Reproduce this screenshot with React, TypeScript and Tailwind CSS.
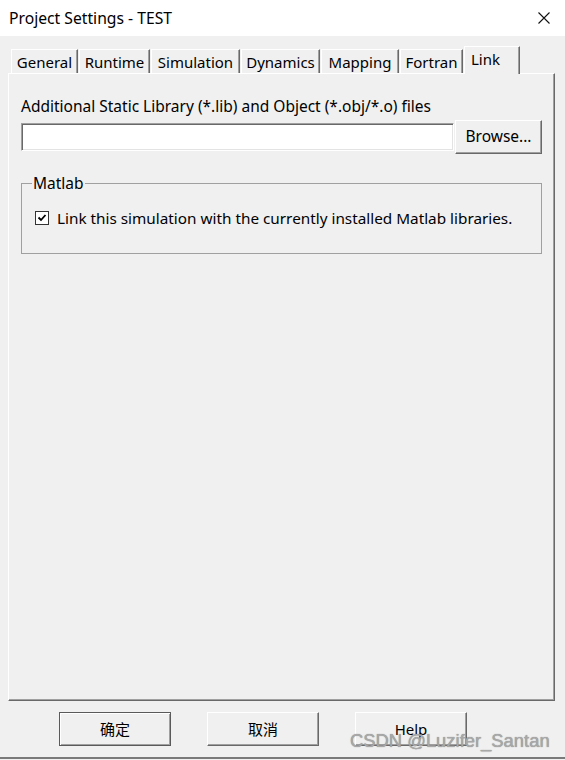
import React, { useState } from "react";

const tabs = [
  { label: "General", w: "w-[67px]" },
  { label: "Runtime", w: "w-[71px]" },
  { label: "Simulation", w: "w-[89px]" },
  { label: "Dynamics", w: "w-[79px]" },
  { label: "Mapping", w: "w-[78px]" },
  { label: "Fortran", w: "w-[63px]" },
  { label: "Link", w: "w-[56px]" },
];

const font = "font-['Noto_Sans','Noto_Sans_CJK_SC',sans-serif]";

const DialogButton: React.FC<{ label: string; isDefault?: boolean }> = ({
  label,
  isDefault,
}) => (
  <button
    type="button"
    className={`w-[112px] h-[34px] flex items-center justify-center text-[15px] text-black bg-[#f0f0f0] ${
      isDefault
        ? "border border-[#5a5a5a] shadow-[inset_1px_1px_0_#ffffff,inset_-1px_-1px_0_#a0a0a0]"
        : "border border-t-white border-l-white border-r-[#696969] border-b-[#696969] shadow-[inset_-1px_-1px_0_#a0a0a0]"
    }`}
  >
    {label}
  </button>
);

const App: React.FC = () => {
  const [active, setActive] = useState("Link");
  const [linkMatlab, setLinkMatlab] = useState(true);
  const [libs, setLibs] = useState("");

  return (
    <div
      className={`relative w-[565px] h-[760px] flex flex-col bg-[#f0f0f0] text-black overflow-hidden ${font}`}
    >
      {/* title bar */}
      <div className="h-[36px] shrink-0 bg-white flex items-center justify-between pl-[9px] pr-[15px]">
        <span className="text-[15.7px] leading-[20px]">Project Settings - TEST</span>
        <svg width="12" height="12" viewBox="0 0 12 12" className="shrink-0">
          <path d="M0.5 0.5 L11.5 11.5 M11.5 0.5 L0.5 11.5" stroke="#111" strokeWidth="1.1" />
        </svg>
      </div>

      {/* tabs */}
      <div className="h-[37px] shrink-0 flex items-end gap-px pl-[11px]">
        {tabs.map((t) => {
          const isActive = t.label === active;
          return (
            <button
              key={t.label}
              type="button"
              onClick={() => setActive(t.label)}
              className={`${t.w} flex text-[15px] bg-[#f0f0f0] border-t border-l border-r border-t-white border-l-white border-r-[#696969] shadow-[inset_-1px_0_0_#a0a0a0] ${
                isActive
                  ? "relative z-10 -mb-px h-[28px] items-start justify-start pl-[6px] pt-[2px] leading-[20px]"
                  : "h-[24px] items-center justify-center leading-[20px]"
              }`}
            >
              {t.label}
            </button>
          );
        })}
      </div>

      {/* page */}
      <div className="flex-1 ml-[8px] w-[547px] border-t border-l border-r border-b border-t-white border-l-white border-r-[#696969] border-b-[#696969] shadow-[inset_-1px_-1px_0_#a0a0a0] pl-[12px] pt-[22px]">
        <div className="text-[15.5px] leading-[20px]">
          Additional Static Library (*.lib) and Object (*.obj/*.o) files
        </div>
        <div className="mt-[4px] flex items-center gap-px h-[34px]">
          <input
            value={libs}
            onChange={(e) => setLibs(e.target.value)}
            className="w-[433px] h-[28px] bg-white outline-none px-1 text-[15px] border border-t-[#a0a0a0] border-l-[#a0a0a0] border-b-white border-r-white shadow-[inset_1px_1px_0_#696969,inset_-1px_-1px_0_#e3e3e3]"
          />
          <button
            type="button"
            className="w-[87px] h-[34px] text-[15.5px] bg-[#f0f0f0] border border-t-white border-l-white border-r-[#696969] border-b-[#696969] shadow-[inset_-1px_-1px_0_#a0a0a0]"
          >
            Browse...
          </button>
        </div>

        <fieldset className="mt-[19px] w-[521px] border border-[#a0a0a0] p-0">
          <legend className="ml-[10px] px-[1px] text-[15.5px] leading-[20px]">Matlab</legend>
          <label className="mt-[15px] mb-[25px] pl-[13px] flex items-center h-[20px] text-[15.3px] cursor-default">
            <span
              onClick={() => setLinkMatlab(!linkMatlab)}
              className="w-[14px] h-[14px] shrink-0 bg-white border border-[#333333] flex items-center justify-center"
            >
              {linkMatlab && (
                <svg width="10" height="10" viewBox="0 0 10 10">
                  <path d="M1.5 4.5 L4 7 L8.5 2" fill="none" stroke="#000" strokeWidth="1.8" />
                </svg>
              )}
            </span>
            <span className="ml-[8px] leading-[20px]">
              Link this simulation with the currently installed Matlab libraries.
            </span>
          </label>
        </fieldset>
      </div>

      {/* dialog buttons */}
      <div className="mt-[11px] shrink-0 flex gap-[36px] pl-[59px]">
        <DialogButton label="确定" isDefault />
        <DialogButton label="取消" />
        <DialogButton label="Help" />
      </div>
      <div className="mt-[11px] mb-px h-[2px] shrink-0 bg-[#7a7a7a]" />

      {/* watermark sits over the Help button, as in the screenshot */}
      <span className="absolute left-[350px] top-[730px] text-[18.4px] leading-[22px] font-['Liberation_Sans',sans-serif] text-[#a8a8a8] [text-shadow:0_0_1px_#7d7d7d] pointer-events-none">
        CSDN @Luzifer_Santan
      </span>
    </div>
  );
};

export default App;
